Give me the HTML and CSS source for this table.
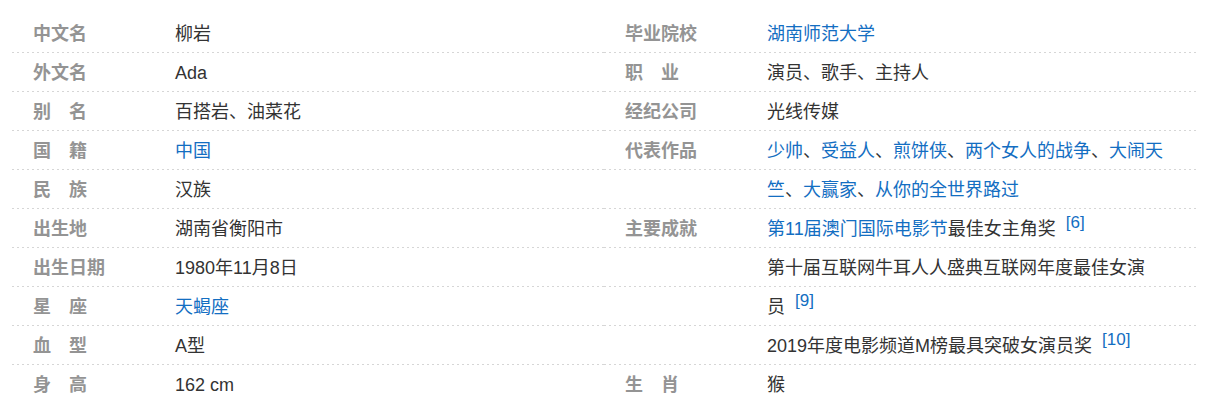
FILE: index.html
```html
<!DOCTYPE html>
<html lang="zh-CN">
<head>
<meta charset="utf-8">
<title>柳岩 基本信息</title>
<link rel="stylesheet" href="styles.css">
</head>
<body>
<div class="basic-info">
  <dl class="col">
    <div class="row"><dt class="label">中文名</dt><dd class="value">柳岩</dd></div>
    <div class="row"><dt class="label">外文名</dt><dd class="value">Ada</dd></div>
    <div class="row"><dt class="label">别　名</dt><dd class="value">百搭岩、油菜花</dd></div>
    <div class="row"><dt class="label">国　籍</dt><dd class="value"><a class="link">中国</a></dd></div>
    <div class="row"><dt class="label">民　族</dt><dd class="value">汉族</dd></div>
    <div class="row"><dt class="label">出生地</dt><dd class="value">湖南省衡阳市</dd></div>
    <div class="row"><dt class="label">出生日期</dt><dd class="value">1980年11月8日</dd></div>
    <div class="row"><dt class="label">星　座</dt><dd class="value"><a class="link">天蝎座</a></dd></div>
    <div class="row"><dt class="label">血　型</dt><dd class="value">A型</dd></div>
    <div class="row"><dt class="label">身　高</dt><dd class="value">162 cm</dd></div>
  </dl>
  <dl class="col">
    <div class="row"><dt class="label">毕业院校</dt><dd class="value"><a class="link">湖南师范大学</a></dd></div>
    <div class="row"><dt class="label">职　业</dt><dd class="value">演员、歌手、主持人</dd></div>
    <div class="row"><dt class="label">经纪公司</dt><dd class="value">光线传媒</dd></div>
    <div class="row"><dt class="label">代表作品</dt><dd class="value"><a class="link">少帅</a>、<a class="link">受益人</a>、<a class="link">煎饼侠</a>、<a class="link">两个女人的战争</a>、<a class="link">大闹天</a></dd></div>
    <div class="row"><dt class="label"></dt><dd class="value"><a class="link">竺</a>、<a class="link">大赢家</a>、<a class="link">从你的全世界路过</a></dd></div>
    <div class="row"><dt class="label">主要成就</dt><dd class="value"><a class="link">第11届澳门国际电影节</a>最佳女主角奖 <sup class="ref">[6]</sup></dd></div>
    <div class="row"><dt class="label"></dt><dd class="value">第十届互联网牛耳人人盛典互联网年度最佳女演</dd></div>
    <div class="row"><dt class="label"></dt><dd class="value">员 <sup class="ref">[9]</sup></dd></div>
    <div class="row"><dt class="label"></dt><dd class="value">2019年度电影频道M榜最具突破女演员奖 <sup class="ref">[10]</sup></dd></div>
    <div class="row"><dt class="label">生　肖</dt><dd class="value">猴</dd></div>
  </dl>
</div>
</body>
</html>
```
FILE: styles.css
```css
html, body {
  margin: 0;
  padding: 0;
  background: #fff;
}

body {
  font-family: "Liberation Sans", Arial, "Noto Sans CJK SC", sans-serif;
  font-size: 18px;
  color: #333;
}

.basic-info {
  display: grid;
  grid-template-columns: 592px 592px;
  padding: 14px 0 0 12px;
}

.col {
  margin: 0;
}

.row {
  display: flex;
  align-items: center;
  height: 38px;
  padding-bottom: 1px;
  line-height: 24px;
  background-image: linear-gradient(to right, #d6d6d6 2px, transparent 2px);
  background-size: 5px 1px;
  background-repeat: repeat-x;
  background-position: left bottom;
}

.label {
  flex: 0 0 142px;
  height: 24px;
  padding-top: 1px;
  padding-left: 21px;
  font-weight: 700;
  color: #949494;
  white-space: nowrap;
}

.value {
  margin: 0;
  padding-top: 1px;
  white-space: nowrap;
}

.link {
  color: #136ec2;
  text-decoration: none;
}

.ref {
  font-size: 17px;
  color: #136ec2;
  vertical-align: 7px;
  line-height: 0;
  margin-left: 5px;
}
```
